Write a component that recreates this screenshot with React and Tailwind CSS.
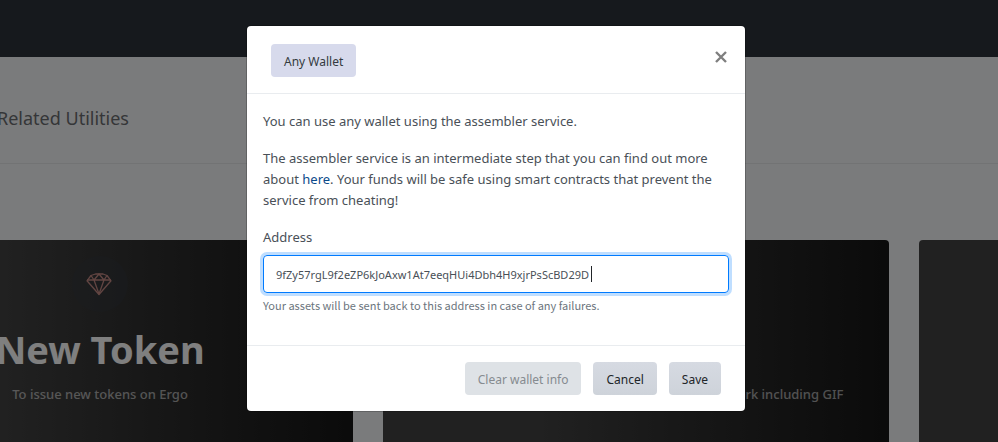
import React, { useState } from "react";

const cards = [
  { title: "New Token", text: "To issue new tokens on Ergo" },
  { title: "Picture NFT", text: "To issue a picture NFT for photo or any other artwork including GIF" },
  { title: "Audio NFT", text: "To issue audio artwork" },
];

const DiamondIcon = () => (
  <svg width="28" height="28" viewBox="0 0 28 28" fill="none" stroke="currentColor" strokeWidth="1.3" strokeLinejoin="round" aria-hidden="true">
    <path d="M5 5.500 9.500 4h7.500L21 5.500 25 10.800 13 24.500 1 10.800Z" />
    <path d="M1 10h24M5 5.500 8 10l5-6 5 6 3-4.500M8 10l5 14 5-14" />
  </svg>
);

const Card = ({ title, text }) => (
  <div className="h-72 rounded bg-linear-to-r from-[#434343] from-30% to-[#161616] pt-4 text-center">
    <div className="mx-auto flex size-14 items-center justify-center rounded-full bg-[#343a40]/40 text-[#c48a84]">
      <DiamondIcon />
    </div>
    <h2 className="mt-3 text-[38px] leading-[50px] font-bold text-white">{title}</h2>
    <p className="mt-2.5 text-[13px] leading-5 font-medium text-white/60">{text}</p>
  </div>
);

const WalletModal = () => {
  const [address, setAddress] = useState("9fZy57rgL9f2eZP6kJoAxw1At7eeqHUi4Dbh4H9xjrPsScBD29D");

  return (
    <div role="dialog" aria-modal="true" className="w-full max-w-[498px] rounded bg-white text-[13px] leading-[21px] text-[#495057] ring-1 ring-black/20">
      <div className="flex items-start justify-between border-b border-[#e9ecef] pt-[18px] pr-[18px] pb-4 pl-6">
        <button type="button" className="h-[33px] rounded bg-[#d7daec] px-[13px] pt-0.5 text-xs text-[#343a40]">
          Any Wallet
        </button>
        <button type="button" aria-label="Close" className="mt-[7px] flex items-center justify-center text-[#7f7f7f]">
          <svg width="12" height="12" viewBox="0 0 12 12" stroke="currentColor" strokeWidth="2.4" aria-hidden="true">
            <path d="M1 1l10 10M11 1 1 11" />
          </svg>
        </button>
      </div>

      <div className="px-4 pt-[17px] pb-8">
        <p className="mb-4">You can use any wallet using the assembler service.</p>
        <p className="mb-4">
          The assembler service is an intermediate step that you can find out more about{" "}
          <a href="#assembler" className="text-[#0b4a8a]">here</a>. Your funds will be safe using smart contracts that
          prevent the service from cheating!
        </p>
        <label htmlFor="address" className="mb-[7px] block">Address</label>
        <div className="relative">
          <input
            id="address"
            type="text"
            value={address}
            onChange={(e) => setAddress(e.target.value)}
            autoFocus
            className="block h-[38px] w-full rounded border border-[#007bff] px-3 text-[11px] text-[#495057] caret-transparent ring-3 ring-[#bfdeff] outline-none"
          />
          <span className="absolute top-[11px] left-[328px] h-4 w-px bg-[#212529]" />
        </div>
        <small className="mt-1 block font-['Noto_Sans_CJK_SC',sans-serif] text-[11px] leading-4 text-[#6c757d]">
          Your assets will be sent back to this address in case of any failures.
        </small>
      </div>

      <div className="flex justify-end gap-3 border-t border-[#e9ecef] pt-4 pr-6 pb-4 text-xs text-[#212529]">
        <button type="button" disabled className="h-[33px] rounded bg-[#dee2e6] px-[13px] pt-0.5 text-[#868b90]">
          Clear wallet info
        </button>
        <button type="button" className="h-[33px] rounded bg-linear-to-b from-[#d6dae2] to-[#ced3da] px-[13px] pt-0.5">
          Cancel
        </button>
        <button type="button" className="h-[33px] rounded bg-linear-to-b from-[#d6dae2] to-[#ced3da] px-[13px] pt-0.5">
          Save
        </button>
      </div>
    </div>
  );
};

const App = () => {
  return (
    <div className="relative h-screen overflow-hidden bg-[#f5f6f8] font-['Noto_Sans','Open_Sans',sans-serif]">
      <header className="h-[57px] bg-[#2c323b]" />
      <div className="border-b border-[#e4e6e9] pt-[53px] pb-[37px]">
        <h1 className="-ml-[3px] text-lg leading-4 text-[#6a6d71]">Related Utilities</h1>
      </div>
      <main className="-mr-[427px] -ml-[153px] grid grid-cols-3 gap-[30px] pt-[76px]">
        {cards.map((card) => (
          <Card key={card.title} {...card} />
        ))}
      </main>

      <div className="absolute inset-0 flex items-start justify-center bg-black/50 pt-[26px] pr-1.5">
        <WalletModal />
      </div>
    </div>
  );
};

export default App;
